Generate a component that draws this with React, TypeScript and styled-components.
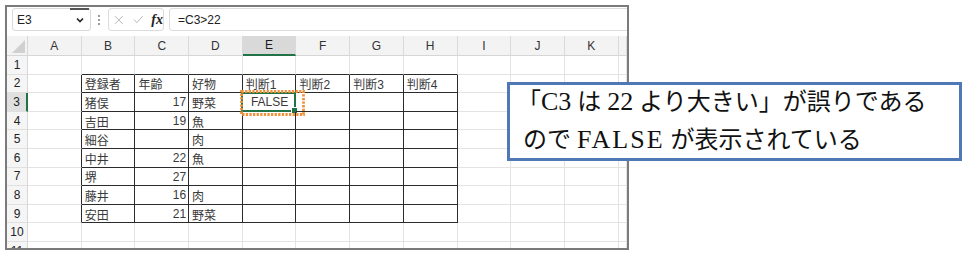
import React from 'react'
import styled, { createGlobalStyle } from 'styled-components'

const GlobalStyle = createGlobalStyle`
  html, body {
    margin: 0;
    padding: 0;
    background: #fff;
  }
  body {
    font-family: "Liberation Sans", "Noto Sans CJK JP", sans-serif;
    overflow: hidden;
  }
`

const COLS = ['A', 'B', 'C', 'D', 'E', 'F', 'G', 'H', 'I', 'J', 'K', '']
const ROWS = [1, 2, 3, 4, 5, 6, 7, 8, 9, 10, 11]

// cell values of the sample table
const DATA: Record<string, string> = {
  B2: '登録者', C2: '年齢', D2: '好物', E2: '判断1', F2: '判断2', G2: '判断3', H2: '判断4',
  B3: '猪俣', C3: '17', D3: '野菜', E3: 'FALSE',
  B4: '吉田', C4: '19', D4: '魚',
  B5: '細谷', D5: '肉',
  B6: '中井', C6: '22', D6: '魚',
  B7: '堺', C7: '27',
  B8: '藤井', C8: '16', D8: '肉',
  B9: '安田', C9: '21', D9: '野菜',
}

const SELECTED = { col: 'E', row: 3 }

const inTable = (ci: number, r: number) => ci >= 1 && ci <= 7 && r >= 2 && r <= 9

const Page = styled.div`
  position: relative;
  width: 963px;
  height: 253px;
  padding: 5px 0 0 5px;
  box-sizing: border-box;
`

const Window = styled.div`
  width: 624px;
  height: 245px;
  box-sizing: border-box;
  border: 2px solid #7b7b7b;
  background: #fff;
  overflow: hidden;
`

const FormulaBar = styled.div`
  display: flex;
  align-items: center;
  height: 23px;
  margin: 1px 0 0 5px;
`

const NameBox = styled.div`
  position: relative;
  display: flex;
  align-items: center;
  width: 79px;
  height: 23px;
  box-sizing: border-box;
  padding-left: 4px;
  border: 1px solid #d9d9d9;
  border-radius: 3px;
  font-size: 12px;
  color: #222;
`

const DropButton = styled.div`
  position: absolute;
  right: 1px;
  top: -1px;
  width: 19px;
  height: 22px;
  border-top: 2px solid #555;
  box-sizing: border-box;
  display: flex;
  align-items: center;
  justify-content: center;
`

const Grip = styled.div`
  margin-left: 7px;
  width: 3px;
  display: flex;
  flex-direction: column;
  gap: 2px;
  span {
    width: 2px;
    height: 2px;
    background: #9a9a9a;
  }
`

const FxBox = styled.div`
  display: flex;
  align-items: center;
  gap: 9px;
  margin-left: 7px;
  width: 56px;
  height: 23px;
  box-sizing: border-box;
  padding-left: 5px;
  border: 1px solid #dcdcdc;
  border-radius: 3px;
`

const Fx = styled.span`
  font-family: "Liberation Serif", serif;
  font-style: italic;
  font-weight: bold;
  font-size: 14px;
  color: #222;
  margin-left: -1px;
`

const FormulaInput = styled.div`
  flex: 1;
  display: flex;
  align-items: center;
  height: 23px;
  margin-left: 5px;
  margin-right: -4px;
  box-sizing: border-box;
  padding-left: 8px;
  border: 1px solid #dcdcdc;
  border-radius: 3px;
  font-size: 12px;
  color: #222;
`

const Sheet = styled.div`
  display: grid;
  grid-template-columns: 21px repeat(11, 53.7px) 1fr;
  grid-template-rows: 20px repeat(11, 18.6px);
  margin-top: 5px;
`

const Corner = styled.div`
  position: relative;
  background: #f3f3f3;
  border-right: 1px solid #d6d6d6;
  border-bottom: 1px solid #d6d6d6;
  box-sizing: border-box;
  &::after {
    content: '';
    position: absolute;
    right: 2px;
    bottom: 2px;
    border-left: 13px solid transparent;
    border-bottom: 13px solid #d0d0d0;
  }
`

const ColHead = styled.div<{ $active?: boolean }>`
  display: flex;
  align-items: center;
  justify-content: center;
  box-sizing: border-box;
  background: ${(p) => (p.$active ? '#d9d9d9' : '#f3f3f3')};
  border-right: 1px solid #dadada;
  border-bottom: ${(p) => (p.$active ? '2px solid #217346' : '1px solid #d6d6d6')};
  font-size: 12px;
  color: ${(p) => (p.$active ? '#1a1a1a' : '#333')};
`

const RowHead = styled.div<{ $active?: boolean }>`
  display: flex;
  align-items: center;
  justify-content: center;
  box-sizing: border-box;
  background: ${(p) => (p.$active ? '#e0e0e0' : '#f5f5f5')};
  border-right: ${(p) => (p.$active ? '2px solid #217346' : '1px solid #d6d6d6')};
  border-bottom: 1px solid #e0e0e0;
  font-size: 12px;
  color: #222;
`

const Cell = styled.div<{ $rightDark?: boolean; $bottomDark?: boolean; $align: string }>`
  position: relative;
  display: flex;
  align-items: center;
  justify-content: ${(p) => p.$align};
  box-sizing: border-box;
  padding: 1px 2px 0 3px;
  border-right: 1px solid ${(p) => (p.$rightDark ? '#2b2b2b' : '#e3e3e3')};
  border-bottom: 1px solid ${(p) => (p.$bottomDark ? '#2b2b2b' : '#e3e3e3')};
  font-family: "Liberation Sans", "Noto Sans CJK JP", sans-serif;
  font-size: 12px;
  color: #3a3a3a;
  white-space: nowrap;
`

const Selection = styled.div`
  position: absolute;
  left: -2px;
  top: -1px;
  right: -1px;
  bottom: -1px;
  border: 2px solid #217346;
  pointer-events: none;
  &::after {
    content: '';
    position: absolute;
    right: -4px;
    bottom: -4px;
    width: 5px;
    height: 5px;
    background: #217346;
    border: 1px solid #fff;
  }
`

const Marker = styled.svg`
  position: absolute;
  left: -4px;
  top: -3px;
  z-index: 2;
  overflow: visible;
`

const Callout = styled.div`
  position: absolute;
  left: 507px;
  top: 82px;
  width: 455px;
  height: 79px;
  box-sizing: border-box;
  border: 3px solid #4e79b4;
  background: #fff;
  padding: 0 0 0 13px;
  font-family: "Liberation Serif", "Noto Sans CJK JP", serif;
  font-size: 24px;
  line-height: 38px;
  color: #111;
`

const Line = styled.div<{ $indent?: number }>`
  white-space: nowrap;
  margin-left: ${(p) => p.$indent || 0}px;
  &:first-child {
    margin-top: -2px;
  }
`

const Latin = styled.span<{ $spread?: boolean }>`
  font-size: 26px;
  letter-spacing: ${(p) => (p.$spread ? '2px' : '0')};
`

const App: React.FC = () => {
  const cells: React.ReactNode[] = []
  cells.push(<Corner key="corner" />)
  COLS.forEach((c) => {
    cells.push(
      <ColHead key={'h' + c} $active={c === SELECTED.col}>{c}</ColHead>
    )
  })

  ROWS.forEach((r) => {
    cells.push(
      <RowHead key={'r' + r} $active={r === SELECTED.row}>{r}</RowHead>
    )
    COLS.forEach((c, ci) => {
      const id = c + r
      const value = DATA[id] || ''
      const isNum = /^\d+$/.test(value)
      const isBool = value === 'FALSE' || value === 'TRUE'
      const align = isNum ? 'flex-end' : isBool ? 'center' : 'flex-start'
      const rightDark = inTable(ci, r) || inTable(ci + 1, r)
      const bottomDark = inTable(ci, r) || inTable(ci, r + 1)
      const selected = c === SELECTED.col && r === SELECTED.row
      cells.push(
        <Cell key={id} $rightDark={rightDark} $bottomDark={bottomDark} $align={align}>
          {value}
          {selected && (
            <>
              <Selection />
              <Marker width="66" height="26" viewBox="0 0 66 26">
                <rect x="2.5" y="1.5" width="62" height="23" fill="none"
                  stroke="#f0913a" strokeWidth="2.8" strokeDasharray="2.3 1.3" />
              </Marker>
            </>
          )}
        </Cell>
      )
    })
  })

  return (
    <>
      <GlobalStyle />
      <Page>
        <Window>
          <FormulaBar>
            <NameBox>
              E3
              <DropButton>
                <svg width="8" height="6" viewBox="0 0 8 6">
                  <polyline points="1,1.5 4,4.5 7,1.5" fill="none" stroke="#222" strokeWidth="1.6" />
                </svg>
              </DropButton>
            </NameBox>
            <Grip><span /><span /><span /></Grip>
            <FxBox>
              <svg width="10" height="10" viewBox="0 0 10 10">
                <path d="M1 1 L9 9 M9 1 L1 9" stroke="#b5b5b5" strokeWidth="1" />
              </svg>
              <svg width="11" height="9" viewBox="0 0 11 9">
                <polyline points="1,4.5 4,7.8 10,1" fill="none" stroke="#b5b5b5" strokeWidth="1" />
              </svg>
              <Fx>fx</Fx>
            </FxBox>
            <FormulaInput>=C3&gt;22</FormulaInput>
          </FormulaBar>
          <Sheet>{cells}</Sheet>
        </Window>
        <Callout>
          <Line $indent={-6}>「<Latin>C3</Latin> は <Latin>22</Latin> より大きい」が誤りである</Line>
          <Line>ので <Latin $spread>FALSE</Latin> が表示されている</Line>
        </Callout>
      </Page>
    </>
  )
}

export default App
